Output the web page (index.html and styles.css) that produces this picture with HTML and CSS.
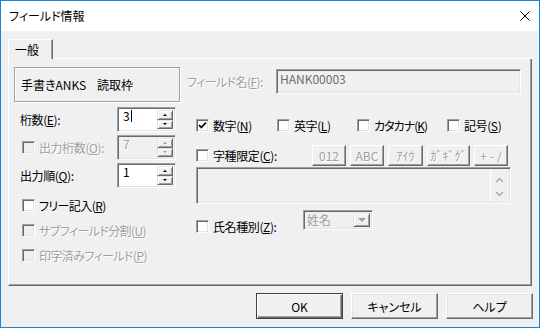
FILE: index.html
```html
<!DOCTYPE html>
<html lang="ja">
<head>
    <meta charset="UTF-8">
    <title>フィールド情報</title>
    <link rel="stylesheet" href="styles.css">
</head>
<body>
    <div class="window">
        <!-- タイトルバー -->
        <div class="titlebar">
            <span class="title">フィールド情報</span>
            <svg class="close" width="10" height="10" viewBox="0 0 10 10"><path d="M0.5 0.5L9.5 9.5M9.5 0.5L0.5 9.5" stroke="#000" stroke-width="1"/></svg>
        </div>

        <div class="client">
            <div class="tabs">
                <div class="tab">一般</div>
                <div class="tab-fill"></div>
            </div>

            <div class="panel">
                <!-- 左列 -->
                <div class="col-left">
                    <div class="groupbox">手書きANKS    読取枠</div>

                    <div class="spin-row">
                        <span class="spin-label">桁数(<u>E</u>):</span>
                        <div class="spin sunken">
                            <div class="spin-edit">3<span class="caret"></span></div>
                            <div class="spin-btns">
                                <div class="spin-btn"><span class="arrow-up"></span></div>
                                <div class="spin-btn"><span class="arrow-down"></span></div>
                            </div>
                        </div>
                    </div>

                    <div class="spin-row">
                        <span class="spin-label with-check disabled"><span class="check off"></span>出力桁数(<u>O</u>):</span>
                        <div class="spin sunken off">
                            <div class="spin-edit disabled">7</div>
                            <div class="spin-btns">
                                <div class="spin-btn"><span class="arrow-up gray"></span></div>
                                <div class="spin-btn"><span class="arrow-down gray"></span></div>
                            </div>
                        </div>
                    </div>

                    <div class="spin-row">
                        <span class="spin-label">出力順(<u>Q</u>):</span>
                        <div class="spin sunken">
                            <div class="spin-edit">1</div>
                            <div class="spin-btns">
                                <div class="spin-btn"><span class="arrow-up"></span></div>
                                <div class="spin-btn"><span class="arrow-down"></span></div>
                            </div>
                        </div>
                    </div>

                    <div class="check-rows">
                        <div class="check-row"><span class="check"></span>フリー記入(<u>R</u>)</div>
                        <div class="check-row disabled"><span class="check off"></span>サブフィールド分割(<u>U</u>)</div>
                        <div class="check-row disabled"><span class="check off"></span>印字済みフィールド(<u>P</u>)</div>
                    </div>
                </div>

                <!-- 右列 -->
                <div class="col-right">
                    <div class="name-row">
                        <span class="name-label disabled">フィールド名(<u>F</u>):</span>
                        <div class="name-field sunken">HANK00003</div>
                    </div>

                    <div class="type-row">
                        <div class="check-item w81">
                            <span class="check">
                                <svg width="11" height="11" viewBox="0 0 11 11"><path d="M2 5L4.3 7.5L9 2.5" fill="none" stroke="#000" stroke-width="1.8"/></svg>
                            </span>数字(<u>N</u>)
                        </div>
                        <div class="check-item w80"><span class="check"></span>英字(<u>L</u>)</div>
                        <div class="check-item w90"><span class="check"></span>カタカナ(<u>K</u>)</div>
                        <div class="check-item"><span class="check"></span>記号(<u>S</u>)</div>
                    </div>

                    <div class="limit-row">
                        <div class="check-item w116"><span class="check"></span>字種限定(<u>C</u>):</div>
                        <div class="limit-btns">
                            <div class="mini-btn">012</div>
                            <div class="mini-btn">ABC</div>
                            <div class="mini-btn w35">ｱｲｳ</div>
                            <div class="mini-btn w43">ｶﾞｷﾞｸﾞ</div>
                            <div class="mini-btn spaced">+-/</div>
                        </div>
                    </div>

                    <div class="limit-box sunken">
                        <div class="limit-text"></div>
                        <div class="limit-scroll">
                            <svg width="9" height="6" viewBox="0 0 9 6"><path d="M1 5L4.5 1.5L8 5" fill="none" stroke="#a8a8a8" stroke-width="1.3"/></svg>
                            <svg width="9" height="6" viewBox="0 0 9 6"><path d="M1 1L4.5 4.5L8 1" fill="none" stroke="#a8a8a8" stroke-width="1.3"/></svg>
                        </div>
                    </div>

                    <div class="kind-row">
                        <div class="check-item w107 low"><span class="check"></span>氏名種別(<u>Z</u>):</div>
                        <div class="combo sunken">
                            <span class="combo-text">姓名</span>
                            <div class="combo-btn"><span class="arrow-down gray big"></span></div>
                        </div>
                    </div>
                </div>
            </div>

            <div class="footer">
                <div class="btn default">OK</div>
                <div class="btn">キャンセル</div>
                <div class="btn">ヘルプ</div>
            </div>
        </div>
    </div>
</body>
</html>
```

FILE: styles.css
```css
body {
    margin: 0;
    font-family: "Noto Sans CJK JP", "Noto Sans", sans-serif;
    font-size: 12px;
    font-feature-settings: "palt";
    color: #000;
    background: #fff;
    white-space: nowrap;
}

.window {
    width: 540px;
    height: 328px;
    box-sizing: border-box;
    border: 1px solid #1883d7;
    display: flex;
    flex-direction: column;
    background: #f0f0f0;
}

/* タイトルバー */
.titlebar {
    height: 30px;
    flex: none;
    background: #fff;
    display: flex;
    align-items: center;
    justify-content: space-between;
    padding: 0 9px 0 8px;
}

.title {
    font-size: 12px;
    line-height: 14px;
}

.client {
    flex: 1;
    display: flex;
    flex-direction: column;
    padding: 8px 7px 0 7px;
}

/* タブ */
.tabs {
    display: flex;
    height: 20px;
    flex: none;
}

.tab {
    width: 45px;
    box-sizing: border-box;
    border-top: 1px solid #fff;
    border-left: 1px solid #fff;
    border-right: 1px solid #696969;
    box-shadow: inset -1px 0 #a0a0a0;
    padding: 2px 0 0 6px;
    line-height: 16px;
}

.tab-fill {
    flex: 1;
    border-bottom: 1px solid #fff;
}

.panel {
    height: 227px;
    flex: none;
    box-sizing: border-box;
    border-left: 1px solid #fff;
    border-right: 1px solid #696969;
    border-bottom: 1px solid #696969;
    box-shadow: inset -1px -1px #a0a0a0;
    display: grid;
    grid-template-columns: 166px 1fr;
    column-gap: 7px;
    padding: 8px 0 0 5px;
}

.disabled {
    color: #a0a0a0;
    text-shadow: 1px 1px 0 #fff;
}

u {
    text-decoration-thickness: 1px;
    text-underline-offset: 1px;
}

.sunken {
    box-sizing: border-box;
    border: 1px solid;
    border-color: #a0a0a0 #fff #fff #a0a0a0;
    box-shadow: inset 1px 1px #696969, inset -1px -1px #e3e3e3;
}

/* チェックボックス */
.check {
    width: 13px;
    height: 13px;
    flex: none;
    box-sizing: border-box;
    border: 1px solid;
    border-color: #a0a0a0 #fff #fff #a0a0a0;
    box-shadow: inset 1px 1px #696969, inset -1px -1px #e3e3e3;
    background: #fff;
    margin-right: 4px;
    display: flex;
}

.check.off {
    background: #f0f0f0;
}

/* 左列 */
.col-left {
    display: flex;
    flex-direction: column;
}

.groupbox {
    height: 35px;
    box-sizing: border-box;
    border: 1px solid #a0a0a0;
    box-shadow: 1px 1px 0 #fff, inset 1px 1px 0 #fff;
    display: flex;
    align-items: center;
    padding-left: 6px;
    white-space: pre;
    font-size: 12px;
}

.spin-row {
    display: flex;
    align-items: center;
    height: 25px;
    margin-top: 3px;
}

.groupbox + .spin-row {
    margin-top: 5px;
}

.spin-label {
    width: 103px;
    box-sizing: border-box;
    padding-left: 6px;
    display: flex;
    align-items: center;
    letter-spacing: -0.4px;
}

.spin-label.with-check {
    padding-left: 8px;
}

.spin {
    width: 59px;
    height: 25px;
    display: flex;
    padding: 2px;
    background: #fff;
}

.spin.off {
    background: #f0f0f0;
}

.spin-edit {
    flex: 1;
    padding-left: 3px;
    line-height: 12px;
    display: flex;
    align-items: flex-start;
}

.caret {
    width: 1px;
    height: 12px;
    margin-left: 1px;
    background: #000;
}

.spin-btns {
    width: 16px;
    display: flex;
    flex-direction: column;
}

.spin-btn {
    flex: 1;
    background: #f0f0f0;
    box-sizing: border-box;
    border: 1px solid;
    border-color: #e3e3e3 #696969 #696969 #e3e3e3;
    box-shadow: inset 1px 1px #fff, inset -1px -1px #a0a0a0;
    display: flex;
    align-items: center;
    justify-content: center;
}

.arrow-up {
    border-left: 2px solid transparent;
    border-right: 2px solid transparent;
    border-bottom: 2px solid #000;
}

.arrow-down {
    border-left: 2px solid transparent;
    border-right: 2px solid transparent;
    border-top: 2px solid #000;
}

.arrow-up.gray {
    border-bottom-color: #a0a0a0;
}

.arrow-down.gray {
    border-top-color: #a0a0a0;
}

.arrow-down.big {
    border-left-width: 4px;
    border-right-width: 4px;
    border-top-width: 4px;
}

.check-rows {
    margin-top: 5px;
    display: flex;
    flex-direction: column;
}

.check-row {
    height: 25px;
    display: flex;
    align-items: center;
    padding-left: 8px;
    letter-spacing: -0.6px;
}

/* 右列 */
.col-right {
    display: flex;
    flex-direction: column;
    padding-top: 2px;
}

.name-row {
    display: flex;
    align-items: center;
    height: 25px;
}

.name-label {
    width: 89px;
    letter-spacing: -0.6px;
}

.name-field {
    width: 245px;
    height: 25px;
    padding: 2px 3px;
    color: #6d6d6d;
    line-height: 14px;
}

.type-row {
    display: flex;
    align-items: center;
    height: 20px;
    margin-top: 21px;
    padding-left: 9px;
}

.check-item {
    display: flex;
    align-items: center;
    letter-spacing: -0.4px;
}

.w81 { width: 81px; }
.w80 { width: 80px; }
.w90 { width: 90px; }
.w107 { width: 107px; }
.w116 { width: 116px; }

.w90 {
    letter-spacing: -1px;
}

.limit-row {
    display: flex;
    align-items: center;
    height: 21px;
    margin-top: 10px;
    padding-left: 9px;
}

.limit-btns {
    display: flex;
    gap: 4px;
}

.mini-btn {
    width: 34px;
    height: 21px;
    box-sizing: border-box;
    border: 1px solid;
    border-color: #fff #696969 #696969 #fff;
    box-shadow: inset -1px -1px #a0a0a0;
    display: flex;
    align-items: center;
    justify-content: center;
    color: #a0a0a0;
    text-shadow: 1px 1px 0 #fff;
    font-size: 12px;
}

.mini-btn.w35 { width: 35px; }
.mini-btn.w43 { width: 43px; }

.mini-btn.spaced {
    letter-spacing: 3px;
    padding-left: 3px;
}

.limit-box {
    margin: 1px 0 0 9px;
    width: 315px;
    height: 37px;
    display: flex;
    padding: 2px;
}

.limit-text {
    flex: 1;
}

.limit-scroll {
    width: 17px;
    border-left: 1px solid #fff;
    display: flex;
    flex-direction: column;
    align-items: center;
    justify-content: space-between;
    padding: 7px 0 4px;
}

.kind-row {
    display: flex;
    align-items: flex-start;
    margin-top: 6px;
    padding-left: 9px;
}

.check-item.low {
    margin-top: 8px;
}

.combo {
    width: 70px;
    height: 20px;
    display: flex;
    padding: 2px;
    align-items: stretch;
}

.combo-text {
    flex: 1;
    color: #a0a0a0;
    line-height: 14px;
    padding-left: 1px;
}

.combo-btn {
    width: 17px;
    box-sizing: border-box;
    border: 1px solid;
    border-color: #e3e3e3 #696969 #696969 #e3e3e3;
    box-shadow: inset 1px 1px #fff, inset -1px -1px #a0a0a0;
    display: flex;
    align-items: center;
    justify-content: center;
}

/* ボタン */
.footer {
    display: flex;
    justify-content: flex-end;
    gap: 8px;
    margin-top: 7px;
    margin-right: -1px;
}

.btn {
    width: 87px;
    height: 26px;
    box-sizing: border-box;
    border: 1px solid;
    border-color: #fff #696969 #696969 #fff;
    box-shadow: inset -1px -1px #a0a0a0, inset 1px 1px #e3e3e3;
    display: flex;
    align-items: center;
    justify-content: center;
    font-size: 12px;
}

.btn.default {
    border-color: #404040;
    box-shadow: inset 1px 1px #fff, inset -1px -1px #696969, inset -2px -2px #a0a0a0;
}
```
